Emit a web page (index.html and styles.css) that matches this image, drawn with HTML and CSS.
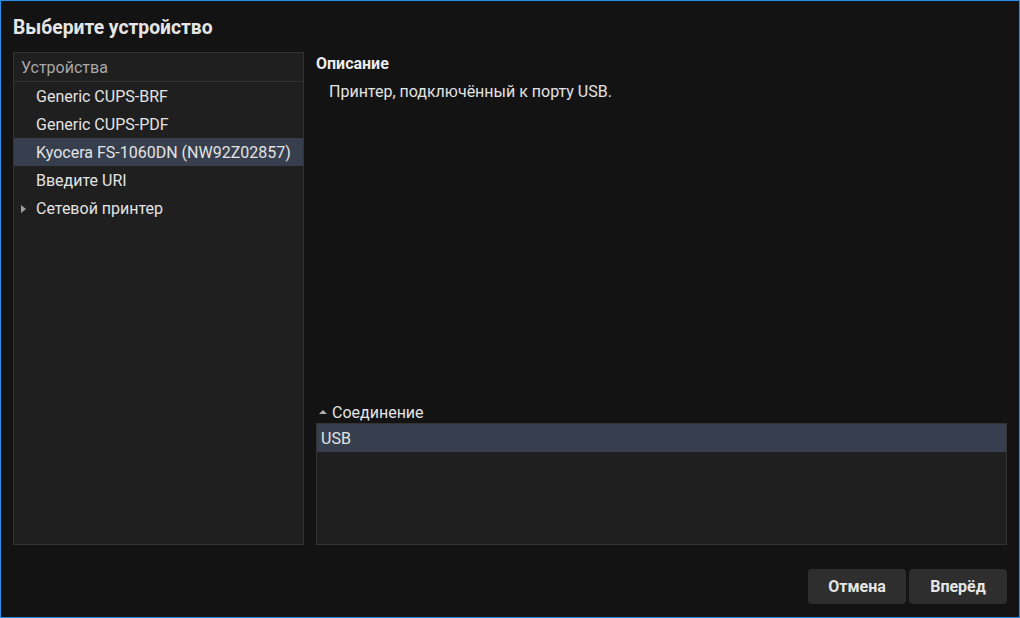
FILE: index.html
```html
<!DOCTYPE html>
<html lang="ru">
<head>
<meta charset="utf-8">
<title>Выберите устройство</title>
<link rel="stylesheet" href="styles.css">
</head>
<body>
<div class="window">
  <h1 class="title">Выберите устройство</h1>
  <div class="main">
    <div class="tree">
      <div class="tree-header">Устройства</div>
      <div class="tree-row">Generic CUPS-BRF</div>
      <div class="tree-row">Generic CUPS-PDF</div>
      <div class="tree-row selected">Kyocera FS-1060DN (NW92Z02857)</div>
      <div class="tree-row">Введите URI</div>
      <div class="tree-row"><span class="arrow-right"></span>Сетевой принтер</div>
    </div>
    <div class="details">
      <div class="heading">Описание</div>
      <div class="desc">Принтер, подключённый к порту USB.</div>
      <div class="spacer"></div>
      <div class="conn-header"><span class="arrow-up"></span>Соединение</div>
      <div class="conn-list">
        <div class="conn-row selected">USB</div>
      </div>
    </div>
  </div>
  <div class="footer">
    <button class="btn">Отмена</button>
    <button class="btn">Вперёд</button>
  </div>
</div>
</body>
</html>
```

FILE: styles.css
```css
html, body {
  margin: 0;
  padding: 0;
  background: #131313;
}
body {
  font-family: Roboto, "Liberation Sans", sans-serif;
  font-size: 16px;
  color: #e3e3e3;
}
.window {
  width: 1020px;
  height: 618px;
  box-sizing: border-box;
  border: 1px solid #2a8fe8;
  padding: 16px 12px 13px 12px;
  display: flex;
  flex-direction: column;
  background: #131313;
}
.title {
  margin: 0 0 14px 0;
  font-size: 19.3px;
  font-weight: 700;
  line-height: 21px;
  color: #e6e6e6;
}
.main {
  height: 493px;
  display: flex;
  gap: 12px;
}
.tree {
  width: 291px;
  box-sizing: border-box;
  border: 1px solid #333333;
  background: #1f1f1f;
}
.tree-header {
  height: 28px;
  line-height: 29px;
  padding-left: 7px;
  color: #a8a8a8;
  border-bottom: 1px solid #333333;
}
.tree-row {
  height: 28px;
  line-height: 29px;
  padding-left: 22px;
  position: relative;
  white-space: nowrap;
}
.tree-row.selected {
  background: #373f4e;
}
.arrow-right {
  position: absolute;
  left: 7px;
  top: 11px;
  width: 0;
  height: 0;
  border-top: 4px solid transparent;
  border-bottom: 4px solid transparent;
  border-left: 5px solid #a0a0a0;
}
.details {
  flex: 1;
  display: flex;
  flex-direction: column;
}
.heading {
  font-weight: 700;
  line-height: 24px;
  color: #ececec;
}
.desc {
  margin-top: 4px;
  line-height: 24px;
  padding-left: 13px;
}
.spacer {
  flex: 1;
}
.conn-header {
  line-height: 21px;
  padding-left: 3px;
  display: flex;
  align-items: center;
}
.arrow-up {
  width: 0;
  height: 0;
  border-left: 4.5px solid transparent;
  border-right: 4.5px solid transparent;
  border-bottom: 4px solid #b0b0b0;
  margin-right: 5px;
  margin-top: -2px;
}
.conn-list {
  height: 122px;
  box-sizing: border-box;
  border: 1px solid #333333;
  background: #1f1f1f;
}
.conn-row {
  height: 28px;
  line-height: 29px;
  padding-left: 4px;
}
.conn-row.selected {
  background: #373f4e;
}
.footer {
  margin-top: 24px;
  display: flex;
  justify-content: flex-end;
  gap: 3px;
}
.btn {
  width: 98px;
  height: 35px;
  border: none;
  border-radius: 4px;
  background: #2e2e2e;
  color: #e6e6e6;
  font-family: Roboto, "Liberation Sans", sans-serif;
  font-size: 16px;
  font-weight: 700;
  padding: 0;
}
```
